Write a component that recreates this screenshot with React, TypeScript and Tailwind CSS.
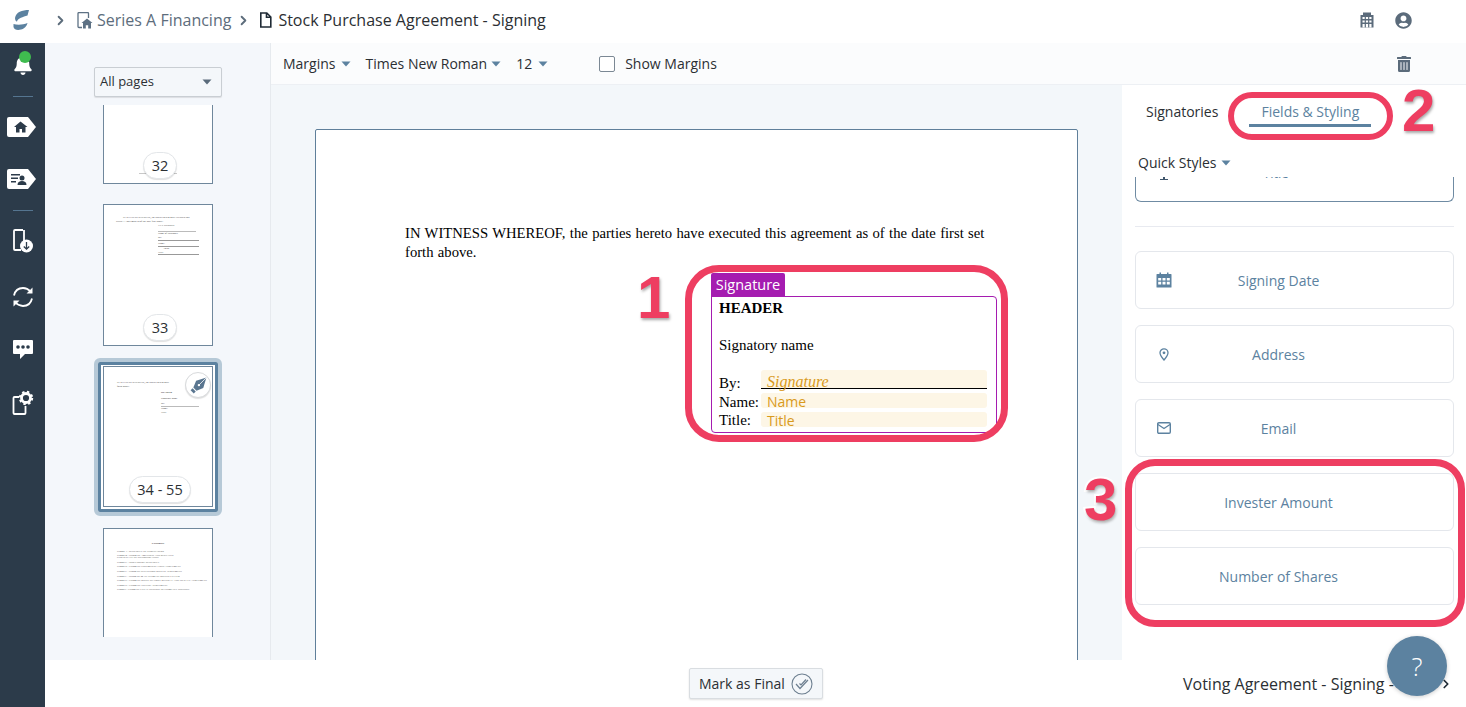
import { CSSProperties, ReactNode } from "react";
import { FaBell, FaTrashAlt, FaUserCircle } from "react-icons/fa";
import { ChevronRight } from "lucide-react";

const Caret = ({ className = "" }: { className?: string }) => (
  <svg width="10" height="6" viewBox="0 0 10 6" className={className}>
    <path d="M0.5 0.5h9L5 5.5z" fill="currentColor" />
  </svg>
);

function Logo() {
  return (
    <svg width="18" height="24" viewBox="0 0 18 24">
      <path d="M16 2C9 2 3 4 2 10c0 2 1 3.700 2 3.500C5 10 10 9 14.500 7.500z" fill="#5c82a0" />
      <path d="M14.500 15c-4.500 2-10.500 2-14 1v3c.5 3 4.500 3.500 7.500 2.500 3-.5 6-3.500 6.500-6.500z" fill="#5c82a0" />
    </svg>
  );
}

function TagIcon({ children }: { children: ReactNode }) {
  return (
    <svg width="30" height="20" viewBox="0 0 30 20">
      <path d="M2 0h19l8 10-8 10H2a2 2 0 0 1-2-2V2a2 2 0 0 1 2-2z" fill="#fff" />
      {children}
    </svg>
  );
}

function Sidebar() {
  return (
    <aside className="w-[45px] shrink-0 bg-[#2c3b4a] flex flex-col items-center text-white">
      <div className="relative h-[53px] w-full flex items-end justify-center pb-[21px]">
        <FaBell size={20} />
        <span className="absolute left-[19px] top-[8px] w-[12px] h-[12px] rounded-full bg-[#3fbb4f]" />
      </div>
      <div className="w-[20px] h-[1px] bg-[#557590]" />
      <div className="mt-[20px] -ml-[2px]">
        <TagIcon>
          <path d="M13.500 4.500L7 10h2v5.500h3.500v-3.500h2.500v3.500h3.500V10h2z" fill="#2c3b4a" />
        </TagIcon>
      </div>
      <div className="mt-[32px] -ml-[2px]">
        <TagIcon>
          <path d="M4 5h9v1.500H4zM4 8.500h7V10H4zM4 12h5v1.500H4z" fill="#2c3b4a" />
          <circle cx="15" cy="9" r="2.500" fill="#2c3b4a" />
          <path d="M10.500 16c0-3 2-4 4.500-4s4.500 1 4.500 4z" fill="#2c3b4a" />
        </TagIcon>
      </div>
      <div className="mt-[21px] w-[20px] h-[1px] bg-[#557590]" />
      <svg width="22" height="26" viewBox="0 0 22 26" className="mt-[17px]">
        <path d="M11 2H3a1 1 0 0 0-1 1v18a1 1 0 0 0 1 1h6M12 2v11" fill="none" stroke="#fff" strokeWidth="1.800" />
        <circle cx="14.500" cy="18" r="6.500" fill="#fff" />
        <path d="M14.500 14v7M11.800 18.500l2.700 2.700 2.700-2.700" fill="none" stroke="#2c3b4a" strokeWidth="1.300" />
      </svg>
      <svg width="22" height="22" viewBox="0 0 22 22" className="mt-[32px]">
        <path d="M2 9.500C3 5 6.500 2 11 2c3 0 5.500 1.300 7.500 3.500M20 12.500c-1 4.500-4.500 7.500-9 7.500-3 0-5.500-1.300-7.500-3.500" fill="none" stroke="#fff" strokeWidth="1.800" />
        <path d="M20.500 1.500v6h-6zM1.500 20.500v-6h6z" fill="#fff" />
      </svg>
      <svg width="20" height="20" viewBox="0 0 20 20" className="mt-[32px]">
        <path d="M1 0h18a1 1 0 0 1 1 1v12a1 1 0 0 1-1 1h-7l-5 5v-5H1a1 1 0 0 1-1-1V1a1 1 0 0 1 1-1z" fill="#fff" />
        <circle cx="5" cy="7" r="1.800" fill="#2c3b4a" />
        <circle cx="10" cy="7" r="1.800" fill="#2c3b4a" />
        <circle cx="15" cy="7" r="1.800" fill="#2c3b4a" />
      </svg>
      <svg width="22" height="26" viewBox="0 0 22 26" className="mt-[30px]">
        <path d="M7 7H2.500a1 1 0 0 0-1 1v15a1 1 0 0 0 1 1h10a1 1 0 0 0 1-1v-7" fill="none" stroke="#fff" strokeWidth="1.800" />
        <circle cx="14" cy="8" r="4.500" fill="none" stroke="#fff" strokeWidth="2.800" />
        <circle cx="14" cy="8" r="6.200" fill="none" stroke="#fff" strokeWidth="2" strokeDasharray="2.400 2.500" />
      </svg>
    </aside>
  );
}

const tinySerif = "font-['Liberation_Serif',serif] text-[2.600px] leading-[3.600px] text-[#333]";

function PageBadge({ label, wide }: { label: string; wide?: boolean }) {
  return (
    <div
      className={`absolute left-[calc(50%+2px)] -translate-x-1/2 h-[27px] rounded-full bg-white border border-[#e3e6e9] shadow-[0_1px_1px_rgba(0,0,0,0.12)] flex items-center justify-center text-[#2b2f33] text-[14.500px] ${
        wide ? "bottom-[3px] w-[62px]" : "bottom-[4px] w-[34px]"
      }`}
    >
      {label}
    </div>
  );
}

function Thumb({ className, children }: { className: string; children?: ReactNode }) {
  return <div className={`relative w-[110px] bg-white border border-[#6f879c] ${className}`}>{children}</div>;
}

function ThumbPanel() {
  const exhibits = [
    "Exhibit A - SCHEDULE OF PURCHASERS",
    "Exhibit B - FORM OF AMENDED AND RESTATED",
    "CERTIFICATE OF INCORPORATION",
    "Exhibit C - DISCLOSURE SCHEDULE",
    "Exhibit D - FORM OF INDEMNIFICATION AGREEMENT",
    "Exhibit E - FORM OF INVESTORS' RIGHTS AGREEMENT",
    "Exhibit F - FORM OF MANAGEMENT RIGHTS LETTER",
    "Exhibit G - FORM OF RIGHT OF FIRST REFUSAL AND CO-SALE AGREEMENT",
    "Exhibit H - FORM OF VOTING AGREEMENT",
    "Exhibit I - FORM OF LEGAL OPINION OF COMPANY COUNSEL",
  ];
  return (
    <div className="w-[226px] shrink-0 bg-[#f4f7fb] border-r border-[#e6eaee] flex flex-col pl-[49px] h-[617px]">
      <div className="mt-[24px] h-[30px] w-[128px] bg-[#f4f7fa] border border-[#c9ced3] rounded-[2px] shadow-[0_1px_1px_rgba(0,0,0,0.1)] flex items-center justify-between pl-[5px] pr-[9px] text-[13px] text-[#2b2f33]">
        All pages
        <Caret className="text-[#5a6b7b]" />
      </div>
      <div className="mt-[8px] pl-[9px] h-[532px] overflow-hidden flex flex-col">
        <Thumb className="h-[79px] shrink-0 border-t-0">
          <div className="absolute left-[35px] w-[38px] top-[68px] h-[1px] bg-[#c8c8c8]" />
          <PageBadge label="32" />
        </Thumb>
        <Thumb className="h-[142px] shrink-0 mt-[20px] pt-[11px] pl-[12px]">
          <div className={tinySerif}>
            <p className="pl-[7px] whitespace-nowrap">IN WITNESS WHEREOF, the parties hereto have executed this</p>
            <p className="whitespace-nowrap">Series A Agreement as of the date first above.</p>
          </div>
          <div className={`${tinySerif} ml-[42px] mt-[1px] w-[41px]`}>
            <p>XYZ Securities</p>
            <p className="border-b border-[#bbb] h-[4px] w-[38px]" />
            <p>Name of Purchaser</p>
            <p className="border-b border-[#999] mt-[1px]">By:</p>
            <p className="border-b border-[#999] mt-[1px]">Name:</p>
            <p className="pl-[5px] h-[2px]">Agent</p>
            <p className="border-b border-[#999] mt-[2px]">Title:</p>
          </div>
          <PageBadge label="33" />
        </Thumb>
        <div className="relative -ml-[9px] mt-[12px] w-[128px] h-[158px] shrink-0 rounded-[6px] border-[4px] border-[#b6c9d7]">
          <div className="h-full w-full border-[3px] border-[#5c82a0] rounded-[2px] bg-white pt-[1px] pl-[2px]">
            <Thumb className="h-[141px] pt-[14px] pl-[13px]">
              <p className={`${tinySerif} whitespace-nowrap`}>IN WITNESS WHEREOF, the parties hereto have</p>
              <p className={tinySerif}>forth above.</p>
              <div className={`${tinySerif} ml-[44px] mt-[3px] w-[38px]`}>
                <p className="font-bold">HEADER</p>
                <p className="mt-[2px]">Signatory name</p>
                <p className="border-b border-[#bbb] mt-[2px]">By:</p>
                <p>Name:</p>
                <p>Title:</p>
              </div>
              <div className="absolute right-[1px] top-[5px] w-[26px] h-[26px] rounded-full bg-white border border-[#d8dadc] shadow-[0_1px_1px_rgba(0,0,0,0.12)] flex items-center justify-center">
                <svg width="19" height="19" viewBox="0 0 24 24">
                  <path d="M22 2L9 6 5.500 14.500 9.500 18.500 18 15z" fill="#5a7690" />
                  <path d="M22 2L12.500 11.500" stroke="#fff" strokeWidth="1" />
                  <circle cx="12.500" cy="11.500" r="1.500" fill="#fff" />
                  <path d="M4.500 15.500l4 4-2.500 2.500-4-4z" fill="#5a7690" />
                </svg>
              </div>
              <PageBadge label="34 - 55" wide />
            </Thumb>
          </div>
        </div>
        <Thumb className="h-[140px] shrink-0 mt-[12px] border-b-0 pt-[13px] pl-[13px]">
          <p className={`${tinySerif} text-center pr-[13px] font-bold`}>EXHIBITS</p>
          <div className={`${tinySerif} mt-[4px] flex flex-col gap-[1px]`}>
            {exhibits.map((e) => (
              <p key={e} className={`whitespace-nowrap ${e.startsWith("CERT") ? "-mt-[2.500px]" : ""}`}>{e}</p>
            ))}
          </div>
        </Thumb>
      </div>
    </div>
  );
}

function Toolbar() {
  return (
    <div className="h-[42px] shrink-0 bg-[#fbfcfd] border-b border-[#edf0f4] flex items-center pl-[12px] pr-[54px] text-[14px] text-[#2b2f33]">
      <span>Margins</span>
      <Caret className="ml-[5px] text-[#5c82a0]" />
      <span className="ml-[15px]">Times New Roman</span>
      <Caret className="ml-[4px] text-[#5c82a0]" />
      <span className="ml-[15px]">12</span>
      <Caret className="ml-[6px] text-[#5c82a0]" />
      <span className="ml-[51px] w-[16px] h-[16px] border border-[#7b8894] rounded-[2px] bg-white" />
      <span className="ml-[10px]">Show Margins</span>
      <FaTrashAlt size={16} className="ml-auto text-[#5b6b7b]" />
    </div>
  );
}

function SignatureBlock() {
  const fieldText = "font-['Open_Sans',sans-serif] text-[14px] text-[#d99a1c]";
  return (
    <div className="ml-[306px] mt-[11px] w-[286px]">
      <div className="w-[74px] h-[24px] bg-[#a51cb0] rounded-t-[2px] text-white text-[14.500px] flex items-center justify-center font-['Open_Sans',sans-serif]">Signature</div>
      <div className="h-[137px] -mt-[1px] border border-[#a51cb0] rounded-[4px] rounded-tl-none pl-[7px] pr-[9px] pt-[2px] font-['Liberation_Serif',serif] text-[15px] text-black">
        <p className="font-bold leading-[18px]">HEADER</p>
        <p className="mt-[19px] leading-[18px]">Signatory name</p>
        <div className="mt-[16px] flex items-end h-[19px]">
          <span className="w-[42px] leading-[16px] -mb-[2px]">By:</span>
          <div className="flex-1 h-[19px] bg-[#fdf6e6] rounded-t-[3px] border-b border-black pl-[6px] italic text-[16px] leading-[23px] text-[#d99a1c]">Signature</div>
        </div>
        <div className="mt-[4px] flex items-center h-[15px]">
          <span className="w-[42px] pt-[3px]">Name:</span>
          <div className={`flex-1 h-[15px] bg-[#fdf6e6] rounded-[3px] pl-[6px] leading-[17px] ${fieldText}`}>Name</div>
        </div>
        <div className="mt-[4px] flex items-center h-[15px]">
          <span className="w-[42px] pt-[2px]">Title:</span>
          <div className={`flex-1 h-[15px] bg-[#fdf6e6] rounded-[3px] pl-[6px] leading-[17px] ${fieldText}`}>Title</div>
        </div>
      </div>
    </div>
  );
}

function DocArea() {
  return (
    <div className="flex-1 bg-[#f3f7fa] pl-[44px] pt-[44px] overflow-hidden">
      <div className="w-[763px] h-[600px] bg-white border border-[#5f7f9a] rounded-t-[2px] pt-[94px] pl-[89px]">
        <p className="w-[590px] font-['Liberation_Serif',serif] text-[14.670px] [word-spacing:0.7px] leading-[19px] text-black">
          IN WITNESS WHEREOF, the parties hereto have executed this agreement as of the date first set forth above.
        </p>
        <SignatureBlock />
      </div>
    </div>
  );
}

function FieldCard({ label, icon }: { label: string; icon?: ReactNode }) {
  return (
    <div className="relative h-[58px] shrink-0 border border-[#e4e7ec] rounded-[6px] flex items-center justify-center text-[14px] text-[#5c82a0] pr-[32px]">
      {icon && <span className="absolute left-[20px] top-[20px] w-[16px] h-[16px] flex items-center justify-center">{icon}</span>}
      {label}
    </div>
  );
}

const CalendarIcon = () => (
  <svg width="16" height="16" viewBox="0 0 16 16">
    <path d="M1 2h14a.5.5 0 0 1 .5.5V15a.5.5 0 0 1-.5.5H1a.5.5 0 0 1-.5-.5V2.500A.5.5 0 0 1 1 2z" fill="#5c82a0" />
    <path d="M3.500 .5h1.500v3H3.500zM11 .5h1.500v3H11z" fill="#5c82a0" />
    <path d="M2.200 6h3v2.500h-3zM6.500 6h3v2.500h-3zM10.800 6h3v2.500h-3zM2.200 9.800h3v2.700h-3zM6.500 9.800h3v2.700h-3zM10.800 9.800h3v2.700h-3z" fill="#fff" />
  </svg>
);

const PinIcon = () => (
  <svg width="10" height="13" viewBox="0 0 10 13">
    <path d="M5 12C3 9.500 1 7.500 1 4.800a4 4 0 0 1 8 0C9 7.500 7 9.500 5 12z" fill="none" stroke="#5c82a0" strokeWidth="1.300" />
    <circle cx="5" cy="4.800" r="1.400" fill="#5c82a0" />
  </svg>
);

const MailIcon = () => (
  <svg width="14" height="12" viewBox="0 0 14 12">
    <rect x="0.700" y="0.700" width="12.600" height="10.600" rx="1.200" fill="none" stroke="#5c82a0" strokeWidth="1.400" />
    <path d="M1 2.500l6 4 6-4" fill="none" stroke="#5c82a0" strokeWidth="1.300" />
  </svg>
);

function RightPanel() {
  return (
    <div className="w-[344px] shrink-0 bg-white pl-[13px] pr-[12px] flex flex-col overflow-hidden">
      <div className="h-[29px] mt-[13px] flex text-[14px] pl-[11px]">
        <span className="text-[#2b2f33] leading-[28px]">Signatories</span>
        <span className="ml-[31px] w-[122px] h-[29px] border-b-[3px] border-[#5c82a0] text-center text-[#5c82a0] leading-[28px]">Fields &amp; Styling</span>
      </div>
      <div className="mt-[25px] h-[21px] flex items-center pl-[3px] text-[14px] text-[#2b2f33]">
        Quick Styles
        <Caret className="ml-[5px] text-[#5c82a0]" />
      </div>
      <div className="mt-[4px] h-[25px] border border-t-0 border-[#6f8ba3] rounded-b-[6px] border-t-[#cfd6dc] relative overflow-hidden">
        <span className="absolute left-[127px] -top-[13px] text-[13px] text-[#5c82a0]">Title</span>
        <span className="absolute left-[27px] -top-[1px] w-[2px] h-[3px] bg-[#3f566c]" />
        <span className="absolute left-[24px] top-[2px] w-[8px] h-[1px] bg-[#3f566c]" />
      </div>
      <div className="mt-[24px] h-[1px] bg-[#e8eaf0] shrink-0" />
      <div className="mt-[24px] flex flex-col gap-[16px]">
        <FieldCard label="Signing Date" icon={<CalendarIcon />} />
        <FieldCard label="Address" icon={<PinIcon />} />
        <FieldCard label="Email" icon={<MailIcon />} />
        <FieldCard label="Invester Amount" />
        <FieldCard label="Number of Shares" />
      </div>
    </div>
  );
}

function Annotation({ className, style }: { className: string; style?: CSSProperties }) {
  return <div className={`absolute border-[#ee3e61] pointer-events-none ${className}`} style={style} />;
}

function Num({ n, className }: { n: string; className: string }) {
  return (
    <span className={`absolute font-['Liberation_Sans',sans-serif] font-bold text-[60px] leading-none text-[#ee3e61] [-webkit-text-stroke:4px_white] [paint-order:stroke_fill] [text-shadow:1px_2px_3px_rgba(0,0,0,0.35)] ${className}`}>
      {n}
    </span>
  );
}

export default function App() {
  return (
    <div className="relative h-screen w-full overflow-hidden bg-white flex flex-col font-['Open_Sans',sans-serif]">
      <header className="h-[43px] shrink-0 flex items-center bg-white pl-[13px] pr-[54px] pb-[3px]">
        <Logo />
        <ChevronRight size={15} strokeWidth={3} className="ml-[22px] text-[#5d6d7c]" />
        <svg width="16" height="17" viewBox="0 0 16 17" className="ml-[9px]">
          <path d="M5 15.500H2a1 1 0 0 1-1-1V1.500a1 1 0 0 1 1-1h8.500a1 1 0 0 1 1 1V6" fill="none" stroke="#5d7184" strokeWidth="1.300" />
          <path d="M10 6.500l5.500 4.500H14v5.500h-2.800v-3.300H8.800v3.300H6V11H4.500z" fill="#5d7184" />
        </svg>
        <span className="ml-[4px] text-[16px] text-[#5d6d7c]">Series A Financing</span>
        <ChevronRight size={15} strokeWidth={3} className="ml-[5px] text-[#5d6d7c]" />
        <svg width="13" height="16" viewBox="0 0 13 16" className="ml-[8px]">
          <path d="M1.800 1h6l4 4v10h-10z M7.500 1v4.300h4.300" fill="none" stroke="#1f2a35" strokeWidth="1.600" />
        </svg>
        <span className="ml-[6px] text-[16px] text-[#2b2f33]">Stock Purchase Agreement - Signing</span>
        <svg width="16" height="16" viewBox="0 0 16 16" className="ml-auto">
          <path d="M4 .5h8V3h2.500v12.500h-13V3H4z" fill="#5b6b7b" />
          <path d="M3.500 5h2.200v2H3.500zM6.900 5h2.200v2H6.900zM10.300 5h2.200v2h-2.200zM3.500 8.500h2.200v2H3.500zM6.900 8.500h2.200v2H6.900zM10.300 8.500h2.200v2h-2.200zM3.500 12h2.200v3.500H3.500zM10.300 12h2.200v3.500h-2.200zM6.900 12h2.200v3.500H6.900z" fill="#fff" />
        </svg>
        <FaUserCircle size={17} className="ml-[20px] text-[#5b6b7b]" />
      </header>

      <div className="flex flex-1 min-h-0">
        <Sidebar />
        <div className="flex-1 min-w-0 flex flex-col">
          <div className="flex flex-1 min-h-0">
            <ThumbPanel />
            <div className="flex-1 min-w-0 flex flex-col">
              <Toolbar />
              <div className="flex h-[575px] overflow-hidden">
                <DocArea />
                <RightPanel />
              </div>
            </div>
          </div>
          <footer className="h-[47px] shrink-0 bg-white flex items-center pl-[644px] pr-[13px]">
            <div className="h-[31px] w-[134px] shrink-0 bg-[#f4f7fa] border border-[#d9dde1] rounded-[2px] shadow-[0_1px_2px_rgba(0,0,0,0.12)] flex items-center pl-[9px] text-[14px] text-[#2b2f33]">
              Mark as Final
              <svg width="22" height="22" viewBox="0 0 22 22" className="ml-[6px] shrink-0">
                <circle cx="11" cy="11" r="10" fill="none" stroke="#6d7f90" strokeWidth="1.100" />
                <path d="M5 11l4 4.500 8-8.500M8.500 10.500l1.500 1.500 5-5.500" fill="none" stroke="#6d7f90" strokeWidth="1.200" />
              </svg>
            </div>
            <span className="ml-[360px] text-[16px] text-[#2b2f33] whitespace-nowrap shrink-0">Voting Agreement - Signing -</span>
            <ChevronRight size={14} strokeWidth={3} className="text-[#1f2a35] ml-auto" />
          </footer>
        </div>
      </div>

      <Annotation className="left-[685px] top-[265px] w-[323px] h-[177px] border-[7px] rounded-[34px]" />
      <Annotation className="left-[1228px] top-[92px] w-[165px] h-[48px] border-[6px] rounded-[24px]" />
      <Annotation className="left-[1125px] top-[459px] w-[340px] h-[168px] border-[7px] rounded-[30px]" />
      <Num n="1" className="left-[637px] top-[268px]" />
      <Num n="2" className="left-[1402px] top-[81px]" />
      <Num n="3" className="left-[1084px] top-[470px]" />

      <div className="absolute left-[1387px] top-[636px] w-[60px] h-[60px] rounded-full bg-[#5c82a0] shadow-[0_1px_4px_rgba(0,0,0,0.2)] flex items-center justify-center text-white text-[26px] font-light">?</div>
    </div>
  );
}
